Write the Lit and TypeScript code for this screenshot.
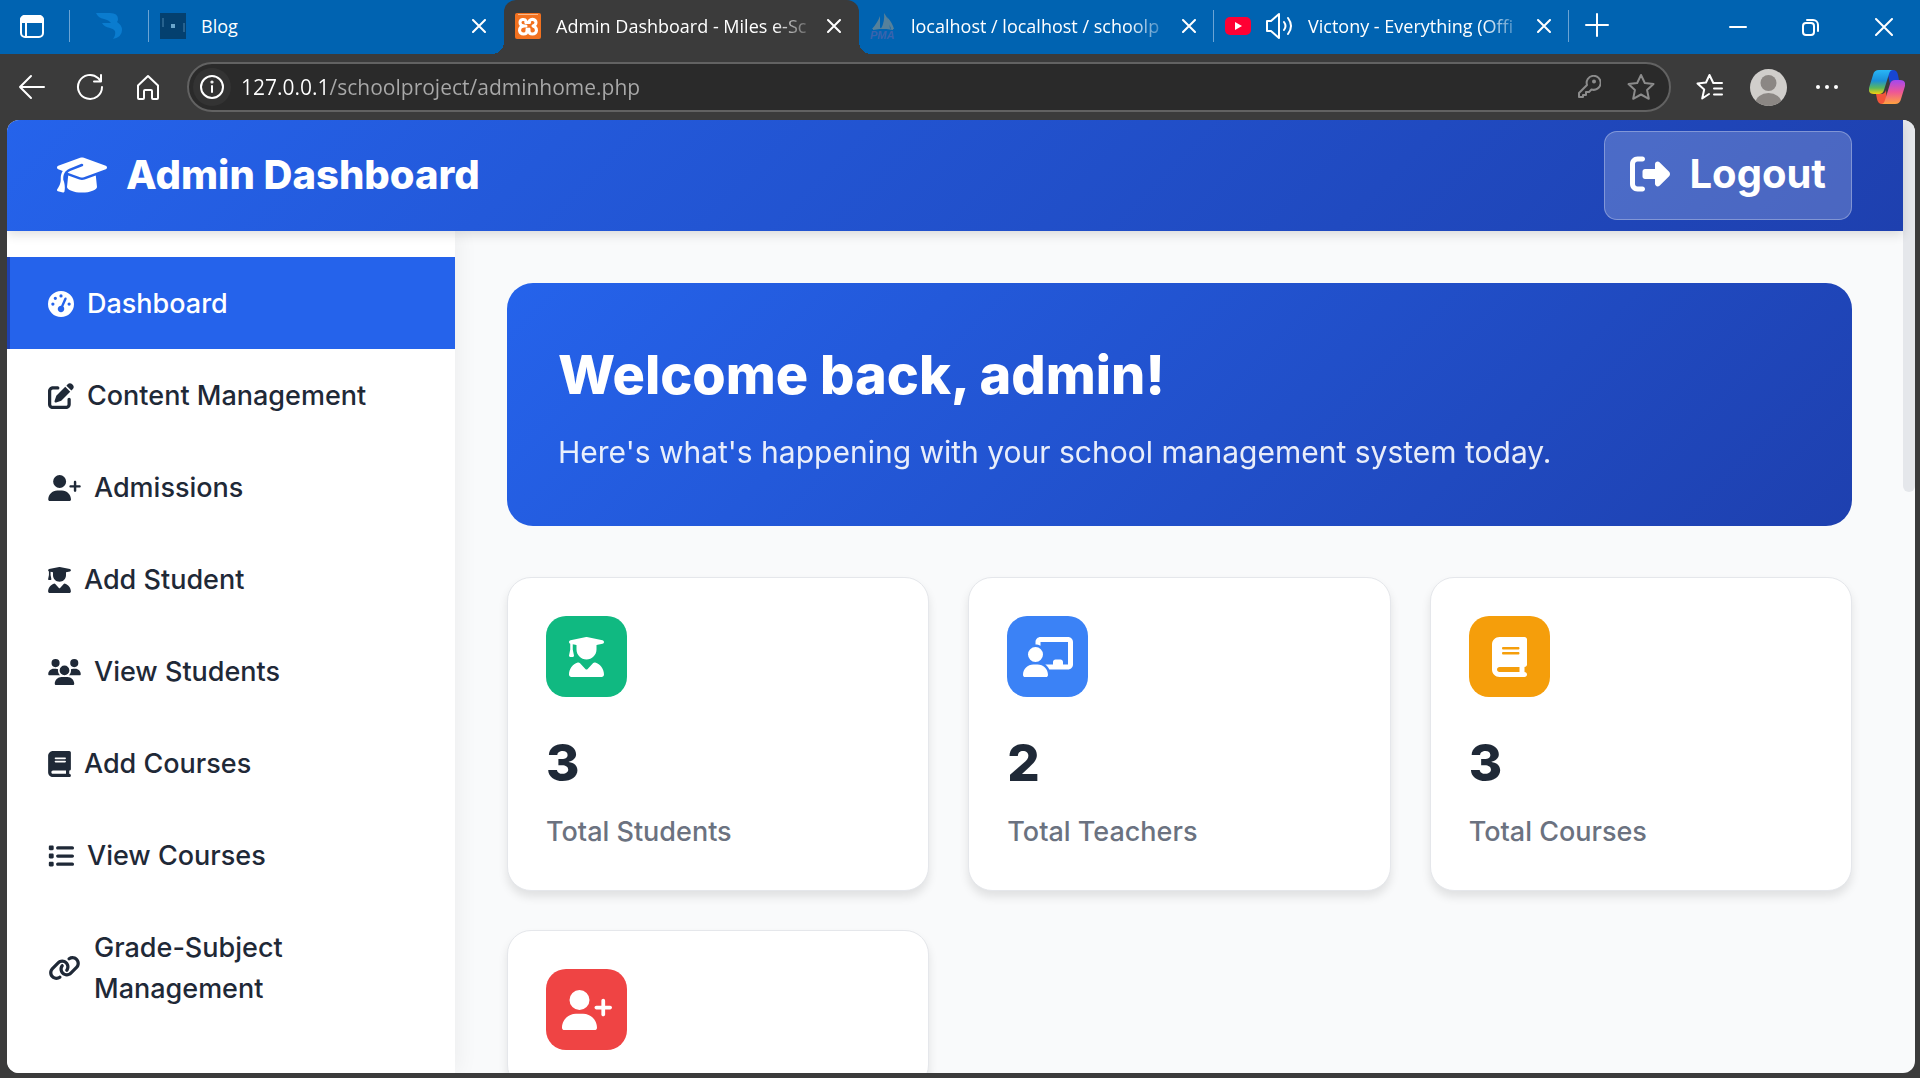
import { LitElement, html, svg, css, nothing, type TemplateResult } from "lit";
import { customElement, property } from "lit/decorators.js";
import { classMap } from "lit/directives/class-map.js";

/* Solid glyphs: [viewBox width, path]; every glyph is 512 units tall. */
const GLYPHS: Record<string, [number, string]> = {
  cap: [640, "M320 32c-8.1 0-16.1 1.4-23.7 4.1L15.8 137.4C6.3 140.9 0 149.9 0 160s6.3 19.1 15.8 22.6l57.9 20.9C57.3 229.3 48 259.8 48 291.9v28.1c0 28.4-10.8 57.7-22.3 80.8c-6.5 13-13.9 25.8-22.5 37.6C0 442.7-.9 448.3 .9 453.4s6 8.9 11.2 10.2l64 16c4.2 1.1 8.7 .3 12.4-2s6.3-6.1 7.1-10.4c8.6-42.8 4.3-81.2-2.1-108.7C90.3 344.3 86 329.8 80 316.5V291.9c0-30.2 10.2-58.7 27.9-81.5c12.9-15.5 29.6-28 49.2-35.7l157-61.7c8.2-3.2 17.5 .8 20.7 9s-.8 17.5-9 20.7l-157 61.7c-12.4 4.9-23.3 12.4-32.2 21.6l159.6 57.6c7.6 2.7 15.6 4.1 23.7 4.1s16.1-1.4 23.7-4.1L624.2 182.6c9.5-3.4 15.8-12.5 15.8-22.6s-6.3-19.1-15.8-22.6L343.7 36.1C336.1 33.4 328.1 32 320 32zM128 408c0 35.3 86 72 192 72s192-36.7 192-72L496.7 262.6 354.5 314c-11.1 4-22.8 6-34.5 6s-23.5-2-34.5-6L143.3 262.6 128 408z"],
  logout: [512, "M377.9 105.9L500.7 228.7c7.2 7.2 11.3 17.1 11.3 27.3s-4.1 20.1-11.3 27.3L377.9 406.1c-6.4 6.4-15 9.9-24 9.9c-18.7 0-33.9-15.2-33.9-33.9l0-62.1-128 0c-17.7 0-32-14.3-32-32l0-64c0-17.7 14.3-32 32-32l128 0 0-62.1c0-18.7 15.2-33.9 33.9-33.9c9 0 17.6 3.6 24 9.9zM160 96L96 96c-17.7 0-32 14.3-32 32l0 256c0 17.7 14.3 32 32 32l64 0c17.7 0 32 14.3 32 32s-14.3 32-32 32l-64 0c-53 0-96-43-96-96L0 128C0 75 43 32 96 32l64 0c17.7 0 32 14.3 32 32s-14.3 32-32 32z"],
  gauge: [512, "M0 256a256 256 0 1 1 512 0A256 256 0 1 1 0 256zM288 96a32 32 0 1 0 -64 0 32 32 0 1 0 64 0zM256 416c35.3 0 64-28.7 64-64c0-17.4-6.9-33.1-18.1-44.6L366 161.7c5.3-12.1-.2-26.3-12.3-31.6s-26.3 .2-31.6 12.3L257.9 288c-.6 0-1.3 0-1.9 0c-35.3 0-64 28.7-64 64s28.7 64 64 64zM176 144a32 32 0 1 0 -64 0 32 32 0 1 0 64 0zM96 288a32 32 0 1 0 0-64 32 32 0 1 0 0 64zm352-32a32 32 0 1 0 -64 0 32 32 0 1 0 64 0z"],
  edit: [512, "M471.6 21.7c-21.9-21.9-57.3-21.9-79.2 0L362.3 51.7l97.9 97.9 30.1-30.1c21.9-21.9 21.9-57.3 0-79.2L471.6 21.7zm-299.2 220c-6.1 6.1-10.8 13.6-13.5 21.9l-29.6 88.8c-2.9 8.6-.6 18.1 5.8 24.6s15.9 8.7 24.6 5.8l88.8-29.6c8.2-2.7 15.7-7.4 21.9-13.5L437.7 172.3 339.7 74.3 172.4 241.7zM96 64C43 64 0 107 0 160V416c0 53 43 96 96 96H352c53 0 96-43 96-96V320c0-17.7-14.3-32-32-32s-32 14.3-32 32v96c0 17.7-14.3 32-32 32H96c-17.7 0-32-14.3-32-32V160c0-17.7 14.3-32 32-32h96c17.7 0 32-14.3 32-32s-14.3-32-32-32H96z"],
  userPlus: [640, "M96 128a128 128 0 1 1 256 0A128 128 0 1 1 96 128zM0 482.3C0 383.8 79.8 304 178.3 304h91.4C368.2 304 448 383.8 448 482.3c0 16.4-13.3 29.7-29.7 29.7H29.7C13.3 512 0 498.7 0 482.3zM504 312V248H440c-13.3 0-24-10.7-24-24s10.7-24 24-24h64V136c0-13.3 10.7-24 24-24s24 10.7 24 24v64h64c13.3 0 24 10.7 24 24s-10.7 24-24 24H552v64c0 13.3-10.7 24-24 24s-24-10.7-24-24z"],
  graduate: [448, "M219.3 .5c3.1-.6 6.3-.6 9.4 0l200 40C439.9 42.7 448 52.6 448 64s-8.1 21.3-19.3 23.5L352 102.9V160c0 70.7-57.3 128-128 128s-128-57.3-128-128V102.9L48 93.3v65.1l15.7 78.4c.9 4.7-.3 9.6-3.3 13.3s-7.6 5.9-12.4 5.9H16c-4.8 0-9.3-2.1-12.4-5.9s-4.3-8.6-3.3-13.3L16 158.4V86.6C6.5 83.3 0 74.3 0 64C0 52.6 8.1 42.7 19.3 40.5l200-40zM111.9 327.7c10.5-3.4 21.8 .4 29.4 8.5l71 75.5c6.3 6.7 17 6.7 23.3 0l71-75.5c7.6-8.1 18.9-11.9 29.4-8.5C401 348.6 448 409.4 448 481.3c0 17-13.8 30.7-30.7 30.7H30.7C13.8 512 0 498.2 0 481.3c0-71.9 47-132.7 111.9-153.6z"],
  users: [640, "M144 0a80 80 0 1 1 0 160A80 80 0 1 1 144 0zM512 0a80 80 0 1 1 0 160A80 80 0 1 1 512 0zM0 298.7C0 239.8 47.8 192 106.7 192h42.7c15.9 0 31 3.5 44.6 9.7c-1.3 7.2-1.9 14.7-1.9 22.3c0 38.2 16.8 72.5 43.3 96c-.2 0-.4 0-.7 0H21.3C9.6 320 0 310.4 0 298.7zM405.3 320c-.2 0-.4 0-.7 0c26.6-23.5 43.3-57.8 43.3-96c0-7.6-.7-15-1.9-22.3c13.6-6.3 28.7-9.7 44.6-9.7h42.7C592.2 192 640 239.8 640 298.7c0 11.8-9.6 21.3-21.3 21.3H405.3zM224 224a96 96 0 1 1 192 0 96 96 0 1 1 -192 0zM128 485.3C128 411.7 187.7 352 261.3 352H378.7C452.3 352 512 411.7 512 485.3c0 14.7-11.9 26.7-26.7 26.7H154.7c-14.7 0-26.7-11.9-26.7-26.7z"],
  book: [448, "M96 0C43 0 0 43 0 96V416c0 53 43 96 96 96H384h32c17.7 0 32-14.3 32-32s-14.3-32-32-32V384c17.7 0 32-14.3 32-32V32c0-17.7-14.3-32-32-32H384 96zm0 384H352v64H96c-17.7 0-32-14.3-32-32s14.3-32 32-32zm32-240c0-8.8 7.2-16 16-16H336c8.8 0 16 7.2 16 16s-7.2 16-16 16H144c-8.8 0-16-7.2-16-16zm16 48H336c8.8 0 16 7.2 16 16s-7.2 16-16 16H144c-8.8 0-16-7.2-16-16s7.2-16 16-16z"],
  list: [512, "M40 48C26.7 48 16 58.7 16 72v48c0 13.3 10.7 24 24 24H88c13.3 0 24-10.7 24-24V72c0-13.3-10.7-24-24-24H40zM192 64c-17.7 0-32 14.3-32 32s14.3 32 32 32H480c17.7 0 32-14.3 32-32s-14.3-32-32-32H192zm0 160c-17.7 0-32 14.3-32 32s14.3 32 32 32H480c17.7 0 32-14.3 32-32s-14.3-32-32-32H192zm0 160c-17.7 0-32 14.3-32 32s14.3 32 32 32H480c17.7 0 32-14.3 32-32s-14.3-32-32-32H192zM16 232v48c0 13.3 10.7 24 24 24H88c13.3 0 24-10.7 24-24V232c0-13.3-10.7-24-24-24H40c-13.3 0-24 10.7-24 24zM40 368c-13.3 0-24 10.7-24 24v48c0 13.3 10.7 24 24 24H88c13.3 0 24-10.7 24-24V392c0-13.3-10.7-24-24-24H40z"],
  link: [640, "M579.8 267.7c56.5-56.5 56.5-148 0-204.5c-50-50-128.8-56.5-186.3-15.4l-1.6 1.1c-14.4 10.3-17.7 30.3-7.4 44.6s30.3 17.7 44.6 7.4l1.6-1.1c32.1-22.9 76-19.3 103.8 8.6c31.5 31.5 31.5 82.5 0 114L422.3 334.8c-31.5 31.5-82.5 31.5-114 0c-27.9-27.9-31.5-71.8-8.6-103.8l1.1-1.6c10.3-14.4 6.9-34.4-7.4-44.6s-34.4-6.9-44.6 7.4l-1.1 1.6C206.5 251.2 213 330 263 380c56.5 56.5 148 56.5 204.5 0L579.8 267.7zM60.2 244.3c-56.5 56.5-56.5 148 0 204.5c50 50 128.8 56.5 186.3 15.4l1.6-1.1c14.4-10.3 17.7-30.3 7.4-44.6s-30.3-17.7-44.6-7.4l-1.6 1.1c-32.1 22.9-76 19.3-103.8-8.6C74 372 74 321 105.5 289.5L217.7 177.2c31.5-31.5 82.5-31.5 114 0c27.9 27.9 31.5 71.8 8.6 103.9l-1.1 1.6c-10.3 14.4-6.9 34.4 7.4 44.6s34.4 6.9 44.6-7.4l1.1-1.6C433.5 260.8 427 182 377 132c-56.5-56.5-148-56.5-204.5 0L60.2 244.3z"],
  teacher: [640, "M160 64c0-35.3 28.7-64 64-64H576c35.3 0 64 28.7 64 64V352c0 35.3-28.7 64-64 64H336.8c-11.8-25.5-29.9-47.5-52.4-64H384V320c0-17.7 14.3-32 32-32h64c17.7 0 32 14.3 32 32v32h64V64L224 64v49.1C205.2 102.2 183.3 96 160 96V64zm0 64a96 96 0 1 1 0 192 96 96 0 1 1 0-192zM133.3 352h53.3C260.3 352 320 411.7 320 485.3c0 14.7-11.9 26.7-26.7 26.7H26.7C11.9 512 0 500.1 0 485.3C0 411.7 59.7 352 133.3 352z"],
};

const glyph = (name: string, size: number): TemplateResult => {
  const [width, path] = GLYPHS[name];
  return html`<svg class="glyph" aria-hidden="true" height=${size} width=${Math.round((size * width) / 512)}
    viewBox="0 0 ${width} 512" fill="currentColor"><path d=${path}></path></svg>`;
};

const line = (size: number, body: TemplateResult, stroke = 2): TemplateResult =>
  html`<svg class="glyph" aria-hidden="true" width=${size} height=${size} viewBox="0 0 ${size} ${size}" fill="none"
    stroke="currentColor" stroke-width=${stroke} stroke-linecap="round" stroke-linejoin="round">${body}</svg>`;

const cross = (size: number): TemplateResult =>
  line(size, svg`<path d=${`M1 1L${size - 1} ${size - 1}M${size - 1} 1L1 ${size - 1}`}></path>`);

const icons = {
  workspaces: line(24, svg`<rect x="1" y="2" width="22" height="21" rx="4"></rect><path d="M1 8V6a4 4 0 0 1 4-4h14a4 4 0 0 1 4 4v2z" fill="currentColor"></path><path d="M6 8v15"></path>`),
  back: line(28, svg`<path d="M26 14H2M13 3L2 14l11 11"></path>`, 2),
  reload: line(28, svg`<path d="M26 14A12 12 0 1 1 22 5l3 3M25 2v6.500h-7"></path>`, 2),
  home: line(28, svg`<path d="M4 12.500L14 3l10 9.500V25a1 1 0 0 1-1 1h-4a1 1 0 0 1-1-1v-7a1 1 0 0 0-1-1h-6a1 1 0 0 0-1 1v7a1 1 0 0 1-1 1H5a1 1 0 0 1-1-1z"></path>`, 2),
  info: line(24, svg`<circle cx="12" cy="12" r="11"></circle><path d="M12 11v6"></path><circle cx="12" cy="7" r=".6" fill="currentColor"></circle>`, 2),
  key: line(24, svg`<path d="M2 22v-4l8-8a7 7 0 1 1 4.500 4.500L12 17H9v3H6v2z"></path><circle cx="17" cy="6.500" r="1" fill="currentColor"></circle>`),
  star: line(28, svg`<path d="M14 2l3.800 8 8.700 1.100-6.400 6 1.700 8.700L14 21.500l-7.800 4.300 1.700-8.700-6.400-6L10.200 10z"></path>`),
  favorites: line(28, svg`<path d="M13 21L6.200 25.500l2-9-6.700-6 8.500-1L13.500 2l3.800 8H26M18 15.500h8M18 21.500h8"></path>`),
  plus: line(24, svg`<path d="M12 1v22M1 12h22"></path>`),
  minimize: line(18, svg`<path d="M1 9h16"></path>`),
  restore: line(18, svg`<rect x="1" y="5" width="11" height="12" rx="3"></rect><path d="M5 2h6a5 5 0 0 1 5 5v6"></path>`),
  speaker: line(28, svg`<path d="M2 9h4l8-7v24l-8-7H2z"></path><path d="M19 10q3 4 0 8M23 6q6 8 0 16"></path>`),
};

const favicons: Record<string, TemplateResult> = {
  blog: html`<svg class="glyph" aria-hidden="true" width="26" height="26" viewBox="0 0 26 26"><rect width="26" height="26" fill="#04406f"></rect><path d="M3 5v9M24 10v9" stroke="#4a83ad"></path><rect x="11" y="11" width="4" height="4" fill="#6aa5cb"></rect></svg>`,
  xampp: html`<svg class="glyph" aria-hidden="true" width="26" height="26" viewBox="0 0 26 26"><rect width="26" height="26" rx="2" fill="#f2711f"></rect><path d="M3 1.500h20" stroke="#f9b98a"></path><g fill="none" stroke="#fff" stroke-width="3" stroke-linejoin="round" stroke-linecap="round"><path d="M11 9.500V8Q10 6 7.500 6.500 5 7 5 9.500 5 12 8 13 4.500 14 4.500 17.500 5 21 8.500 21 12 21 12 18V16"></path><path d="M11 9.500h3.500V7.500Q16 6 18.500 6.500 21 7.500 21 9.500 21 12 18 13 21.500 14 21.500 17.500 21 21 17.500 21 14 21 14 18v-2M8 13h3"></path></g></svg>`,
  pma: html`<svg class="glyph" aria-hidden="true" width="26" height="26" viewBox="0 0 26 26"><path d="M2 16Q8 9 10 3v13zM11 16Q15 8 14 0q6 8 6 16zM17 4q5 5 7 12h-3z" fill="#56819b"></path><path d="M3 16.500q10-3 20 0" fill="none" stroke="#56819b"></path><text x="0" y="26" font-family="Liberation Sans, sans-serif" font-size="11" font-weight="700" font-style="italic" fill="#3a63ad">PMA</text></svg>`,
  youtube: html`<svg class="glyph" aria-hidden="true" width="26" height="26" viewBox="0 0 26 26"><rect y="4" width="26" height="18" rx="5" fill="#ff0033"></rect><path d="M10 9l7 4-7 4z" fill="#fff"></path></svg>`,
};

const bird = html`<svg class="glyph" aria-hidden="true" width="28" height="28" viewBox="0 0 28 28"><path d="M1 1h14q8 0 8 6 0 2-1 3 5 3 5 8 0 7-9 9 3-4 2-8-1-2-5-3-6-1-8-5h9Q14 8 9 7 3 6 1 1z" fill="#0a7ccf"></path></svg>`;

const copilot = html`<svg class="glyph" aria-hidden="true" width="36" height="34" viewBox="0 0 36 34">
  <defs>
    <linearGradient id="cool" x1="0" y1="0" x2="0" y2="1"><stop offset="0" stop-color="#29b6f6"></stop><stop offset=".45" stop-color="#1a8fd8"></stop><stop offset=".75" stop-color="#5cb85c"></stop><stop offset="1" stop-color="#f7d00c"></stop></linearGradient>
    <linearGradient id="warm" x1="0" y1="0" x2="0" y2="1"><stop offset="0" stop-color="#a348f0"></stop><stop offset=".5" stop-color="#ee5696"></stop><stop offset="1" stop-color="#ffa23f"></stop></linearGradient>
  </defs>
  <path d="M18 0h6q4 0 5 5l1 5h-4q-4 0-5 4z" fill="#1746d1"></path>
  <path d="M18 34h-5q-4 0-5-5l-1-5h5q4 0 5-4z" fill="#f2553a"></path>
  <path d="M10 0h14q-3 0-4 4l-5 16q-1 4-5 4H5q-6 0-5-6L4 5q1-5 6-5z" fill="url(#cool)"></path>
  <path d="M26 34H12q3 0 4-4l5-16q1-4 5-4h5q6 0 5 6l-4 13q-1 5-6 5z" fill="url(#warm)"></path>
</svg>`;

const avatar = html`<svg class="glyph" aria-hidden="true" width="37" height="37" viewBox="0 0 37 37">
  <defs><clipPath id="disc"><circle cx="18.500" cy="18.500" r="18.500"></circle></clipPath></defs>
  <g clip-path="url(#disc)"><rect width="37" height="37" fill="#d0cecb"></rect><circle cx="18.500" cy="14" r="8" fill="#8b8784"></circle><ellipse cx="18.500" cy="34" rx="13" ry="10" fill="#8b8784"></ellipse></g>
</svg>`;

const reset = css`
  * { box-sizing: border-box; }
  button { margin: 0; padding: 0; border: 0; background: none; color: inherit; font: inherit; cursor: pointer; }
  a { color: inherit; text-decoration: none; }
  .glyph { display: block; flex: none; }
`;

interface Tab { title: string; icon: string; active?: boolean; audio?: boolean; divided?: boolean; faded?: boolean; }

const TABS: Tab[] = [
  { title: "Blog", icon: "blog" },
  { title: "Admin Dashboard - Miles e-Sc", icon: "xampp", active: true, faded: true },
  { title: "localhost / localhost / schoolp", icon: "pma", divided: true, faded: true },
  { title: "Victony - Everything (Offi", icon: "youtube", audio: true, divided: true, faded: true },
];

@customElement("browser-bar")
class BrowserBar extends LitElement {
  static styles = [reset, css`
    :host { display: block; flex: none; color: #fff; font-family: "Open Sans", "Noto Sans", sans-serif; }
    .strip { display: flex; align-items: stretch; height: 54px; background: #0063b1; }
    .pinned { display: flex; gap: 25px; align-items: center; padding: 0 0 2px 20px; }
    .rule { width: 1px; height: 32px; background: #6ba4d4; }
    .tab { position: relative; display: flex; flex: 0 1 355px; align-items: center; min-width: 0; padding: 0 0 2px 11px; }
    .tab .rule { margin-left: 11px; }
    .tab .rule.hidden { visibility: hidden; }
    .tab.active { border-radius: 12px 12px 0 0; background: #3b3b3b; }
    .tab.active::before, .tab.active::after { content: ""; position: absolute; bottom: 0; width: 12px; height: 12px; }
    .tab.active::before { right: 100%; background: radial-gradient(circle at 0 0, #0063b1 12px, #3b3b3b 12px); }
    .tab.active::after { left: 100%; background: radial-gradient(circle at 100% 0, #0063b1 12px, #3b3b3b 12px); }
    .title { flex: 1; min-width: 0; margin: 0 4px 0 15px; font-size: 18px; line-height: 26px; white-space: nowrap; }
    .title.faded { -webkit-mask-image: linear-gradient(to right, #000 calc(100% - 44px), transparent); mask-image: linear-gradient(to right, #000 calc(100% - 44px), transparent); }
    .audio { margin-left: 14px; }
    .close { display: grid; flex: none; place-items: center; width: 26px; height: 26px; }
    .new { display: grid; place-items: center; width: 56px; padding-bottom: 4px; }
    .window { display: flex; margin-left: auto; }
    .window button { display: grid; place-items: center; width: 73px; }
    .tools { display: flex; align-items: center; height: 66px; padding: 0 15px 0 18px; background: #3b3b3b; }
    .nav { display: flex; gap: 30px; }
    .address { display: flex; flex: 1; align-items: center; height: 50px; margin: 0 25px; padding: 0 14px 0 4px; border: 2px solid #626262; border-radius: 25px; background: #2a2a2a; }
    .site { display: grid; flex: none; place-items: center; width: 38px; height: 38px; border-radius: 50%; background: #333; }
    .url {
      flex: 1; min-width: 0; margin-left: 10px; padding: 0; border: 0; outline: 0; font: inherit; font-size: 21px; line-height: 30px; color: #fff;
      background: linear-gradient(to right, #fff 88px, #a9a9a9 88px); -webkit-background-clip: text; background-clip: text; -webkit-text-fill-color: transparent;
    }
    .inside { display: flex; gap: 26px; color: #8c8c8c; }
    .outside { display: flex; gap: 26px; align-items: center; }
    .dots { display: flex; gap: 5px; margin: 0 5px 0 3px; }
    .dots i { width: 4px; height: 4px; border-radius: 50%; background: #fff; }
  `];

  private tab(tab: Tab) {
    return html`<div class=${classMap({ tab: true, active: !!tab.active })} role="tab" aria-selected=${tab.active ? "true" : "false"}>
      ${favicons[tab.icon]}
      ${tab.audio ? html`<button class="audio" aria-label="Mute tab">${icons.speaker}</button>` : nothing}
      <span class=${classMap({ title: true, faded: !!tab.faded })}>${tab.title}</span>
      <button class="close" aria-label="Close tab">${cross(14)}</button>
      <span class=${classMap({ rule: true, hidden: !tab.divided })}></span>
    </div>`;
  }

  render() {
    return html`
      <div class="strip">
        <div class="pinned">
          <button aria-label="Workspaces">${icons.workspaces}</button><span class="rule"></span>
          ${bird}<span class="rule"></span>
        </div>
        ${TABS.map((t) => this.tab(t))}
        <button class="new" aria-label="New tab">${icons.plus}</button>
        <div class="window">
          <button aria-label="Minimize">${icons.minimize}</button>
          <button aria-label="Restore">${icons.restore}</button>
          <button aria-label="Close window">${cross(18)}</button>
        </div>
      </div>
      <div class="tools">
        <div class="nav">
          <button aria-label="Back">${icons.back}</button>
          <button aria-label="Refresh">${icons.reload}</button>
          <button aria-label="Home">${icons.home}</button>
        </div>
        <div class="address">
          <button class="site" aria-label="Site information">${icons.info}</button>
          <input class="url" type="text" aria-label="Address" .value=${"127.0.0.1/schoolproject/adminhome.php"} />
          <div class="inside">
            <button aria-label="Passwords">${icons.key}</button>
            <button aria-label="Add to favorites">${icons.star}</button>
          </div>
        </div>
        <div class="outside">
          <button aria-label="Favorites">${icons.favorites}</button>
          <button aria-label="Profile">${avatar}</button>
          <button class="dots" aria-label="Settings and more"><i></i><i></i><i></i></button>
          <button aria-label="Copilot">${copilot}</button>
        </div>
      </div>`;
  }
}

@customElement("stat-card")
class StatCard extends LitElement {
  @property() icon = "book";
  @property() tone = "green";
  @property() value = "";
  @property() label = "";

  static styles = [reset, css`
    :host { display: block; padding: 38px; border: 1px solid #e5e7eb; border-radius: 24px; background: #fff; box-shadow: 0 6px 10px rgba(0, 0, 0, 0.1); }
    .badge { display: grid; place-items: center; width: 81px; height: 81px; border-radius: 20px; color: #fff; }
    .green { background: #10b981; }
    .blue { background: #3b82f6; }
    .amber { background: #f59e0b; }
    .red { background: #ef4444; }
    .value { margin: 25px 0 7px; font-size: 51px; font-weight: 800; line-height: 82px; color: #1f2937; }
    .label { margin: 0; font-size: 27px; font-weight: 500; line-height: 41px; color: #6b7280; }
  `];

  render() {
    return html`
      <div class="badge ${this.tone}">${glyph(this.icon, 40)}</div>
      ${this.label ? html`<p class="value">${this.value}</p><p class="label">${this.label}</p>` : nothing}`;
  }
}

const MENU: [string, string][] = [
  ["gauge", "Dashboard"],
  ["edit", "Content Management"],
  ["userPlus", "Admissions"],
  ["graduate", "Add Student"],
  ["users", "View Students"],
  ["book", "Add Courses"],
  ["list", "View Courses"],
  ["link", "Grade-Subject Management"],
];

const STATS = [
  { icon: "graduate", tone: "green", value: "3", label: "Total Students" },
  { icon: "teacher", tone: "blue", value: "2", label: "Total Teachers" },
  { icon: "book", tone: "amber", value: "3", label: "Total Courses" },
  { icon: "userPlus", tone: "red", value: "", label: "" },
];

@customElement("app-root")
class AppRoot extends LitElement {
  static styles = [reset, css`
    :host { display: flex; flex-direction: column; height: 100vh; overflow: hidden; background: #3b3b3b; font-family: Inter, "Open Sans", sans-serif; }
    .viewport { display: flex; flex: 1; min-height: 0; margin: 0 5px 5px 7px; overflow: hidden; border-radius: 12px; background: #f9fafb; }
    .page { display: flex; flex: 1; flex-direction: column; min-width: 0; }
    .scroll { flex: none; width: 12px; }
    .thumb { height: 39%; border-radius: 0 0 6px 6px; background: #e5e7eb; }
    .top {
      position: relative; z-index: 1; display: flex; flex: none; align-items: center; justify-content: space-between; padding: 11px 51px 11px 50px;
      background: linear-gradient(135deg, #2563eb, #1e40af); box-shadow: 0 4px 10px rgba(0, 0, 0, 0.12); color: #fff;
    }
    .brand, .logout { display: flex; align-items: center; gap: 19px; font-size: 40px; font-weight: 700; line-height: 60px; }
    .brand { margin: 0; padding-bottom: 2px; font-weight: 800; }
    .logout { padding: 12px 25px 15px; border: 1px solid rgba(255, 255, 255, 0.3); border-radius: 13px; background: rgba(255, 255, 255, 0.2); }
    .body { display: flex; flex: 1; min-height: 0; }
    .side { flex: none; width: 448px; padding-top: 26px; background: #fff; box-shadow: 4px 0 20px rgba(0, 0, 0, 0.05); }
    .menu { margin: 0; padding: 0; list-style: none; }
    .item { display: flex; align-items: center; gap: 13px; padding: 26px 38px 25px; border-left: 3px solid transparent; font-size: 27px; font-weight: 500; line-height: 41px; color: #1f2937; }
    .item.current { border-left-color: #1e40af; background: #2563eb; color: #fff; }
    .main { display: flex; flex: 1; flex-direction: column; gap: 51px; min-width: 0; padding: 52px 51px 52px 52px; overflow: hidden; }
    .welcome { flex: none; padding: 51px; border-radius: 26px; background: linear-gradient(135deg, #2563eb, #1e40af); color: #fff; }
    .hello { margin: 0 0 13px; font-size: 54px; font-weight: 800; line-height: 82px; }
    .note { margin: 0; font-size: 30px; line-height: 46px; opacity: 0.9; }
    .cards { display: grid; flex: none; grid-template-columns: repeat(3, 1fr); gap: 39px; }
  `];

  render() {
    return html`
      <browser-bar></browser-bar>
      <div class="viewport">
        <div class="page">
          <header class="top">
            <h1 class="brand">${glyph("cap", 40)}<span>Admin Dashboard</span></h1>
            <a class="logout" href="#logout">${glyph("logout", 40)}<span>Logout</span></a>
          </header>
          <div class="body">
            <nav class="side" aria-label="Sections">
              <ul class="menu">
                ${MENU.map(([icon, label], i) => html`<li>
                  <a class=${classMap({ item: true, current: i === 0 })} href="#${icon}">${glyph(icon, 26)}<span>${label}</span></a>
                </li>`)}
              </ul>
            </nav>
            <main class="main">
              <section class="welcome">
                <h2 class="hello">Welcome back, admin!</h2>
                <p class="note">Here's what's happening with your school management system today.</p>
              </section>
              <section class="cards">
                ${STATS.map((s) => html`<stat-card icon=${s.icon} tone=${s.tone} value=${s.value} label=${s.label}></stat-card>`)}
              </section>
            </main>
          </div>
        </div>
        <div class="scroll"><div class="thumb"></div></div>
      </div>`;
  }
}
